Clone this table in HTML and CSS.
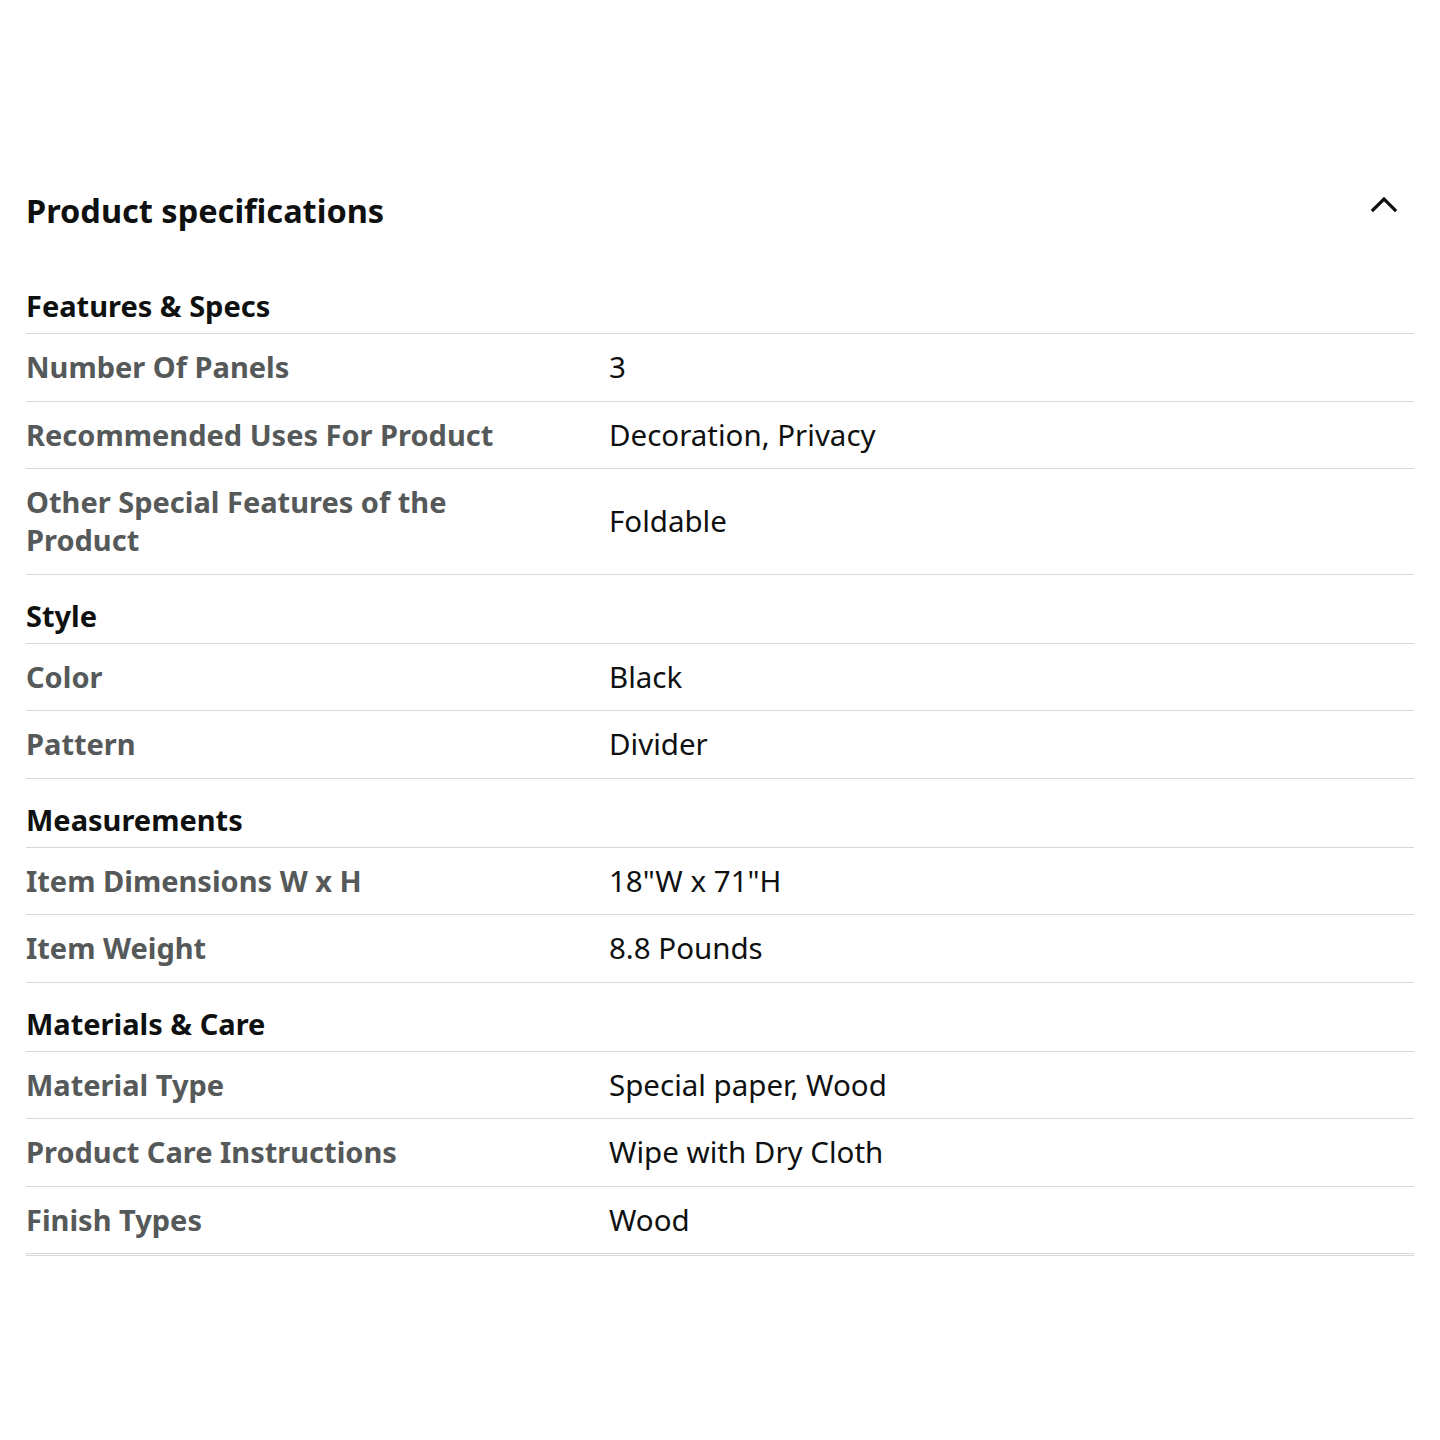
FILE: index.html
```html
<!DOCTYPE html>
<html lang="en">
<head>
<meta charset="utf-8">
<title>Product specifications</title>
<link rel="stylesheet" href="styles.css">
</head>
<body>
<section class="specs">
  <header class="specs-header">
    <h2 class="specs-title">Product specifications</h2>
    <svg class="chevron" width="28" height="18" viewBox="0 0 28 18" aria-hidden="true">
      <path d="M3 15 L14 4 L25 15" fill="none" stroke="#0f1111" stroke-width="3.2" stroke-linecap="square"/>
    </svg>
  </header>

  <h3 class="group-title group-first">Features &amp; Specs</h3>
  <div class="row"><div class="label">Number Of Panels</div><div class="value">3</div></div>
  <div class="row"><div class="label">Recommended Uses For Product</div><div class="value">Decoration, Privacy</div></div>
  <div class="row"><div class="label">Other Special Features of the Product</div><div class="value">Foldable</div></div>

  <h3 class="group-title">Style</h3>
  <div class="row"><div class="label">Color</div><div class="value">Black</div></div>
  <div class="row"><div class="label">Pattern</div><div class="value">Divider</div></div>

  <h3 class="group-title">Measurements</h3>
  <div class="row"><div class="label">Item Dimensions W x H</div><div class="value">18"W x 71"H</div></div>
  <div class="row"><div class="label">Item Weight</div><div class="value">8.8 Pounds</div></div>

  <h3 class="group-title">Materials &amp; Care</h3>
  <div class="row"><div class="label">Material Type</div><div class="value">Special paper, Wood</div></div>
  <div class="row"><div class="label">Product Care Instructions</div><div class="value">Wipe with Dry Cloth</div></div>
  <div class="row row-last"><div class="label">Finish Types</div><div class="value">Wood</div></div>
</section>
</body>
</html>
```
FILE: styles.css
```css
html, body {
  margin: 0;
  padding: 0;
  background: #ffffff;
}
body {
  font-family: "Noto Sans", "Open Sans", Arial, sans-serif;
  color: #0f1111;
}
.specs {
  margin: 0 26px;
  padding-top: 185px;
}
.specs-header {
  display: flex;
  align-items: center;
  justify-content: space-between;
  padding-right: 16px;
  height: 52px;
}
.specs-title {
  margin: 0;
  font-size: 32.5px;
  font-weight: 700;
  line-height: 52px;
  color: #0f1111;
}
.chevron {
  display: block;
  margin-top: -14px;
}
.group-title {
  margin: 0;
  padding: 22px 0 8px;
  font-size: 29px;
  font-weight: 700;
  line-height: 38px;
  color: #0f1111;
  border-bottom: 1px solid #d5d9d9;
}
.group-first {
  padding-top: 50px;
}
.row {
  display: grid;
  grid-template-columns: 583px 1fr;
  align-items: center;
  padding: 14px 0 14.5px;
  border-bottom: 1px solid #d5d9d9;
}
.label {
  padding-right: 100px;
  font-size: 29px;
  font-weight: 700;
  line-height: 38px;
  color: #565959;
}
.value {
  font-size: 29.5px;
  font-weight: 400;
  line-height: 38px;
  color: #0f1111;
}
.row-last {
  border-bottom: 3px double #d5d9d9;
}
```
